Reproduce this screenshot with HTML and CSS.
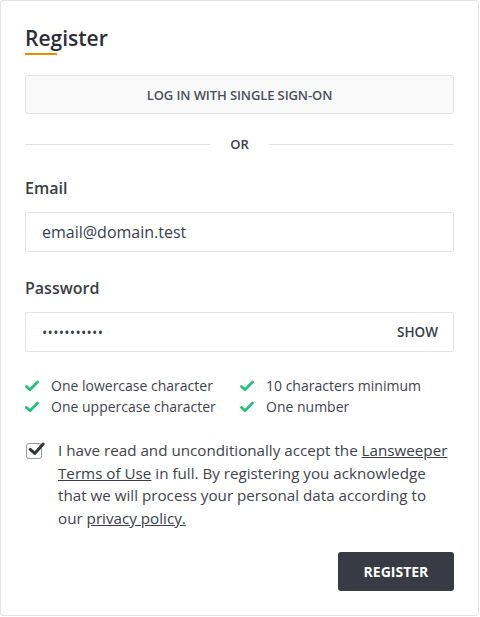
FILE: index.html
```html
<!DOCTYPE html>
<html>
<head>
<meta charset="utf-8">
<link rel="stylesheet" href="styles.css">
</head>
<body>
<div class="card">
  <h1 class="title">Register</h1>
  <button class="sso">LOG IN WITH SINGLE SIGN-ON</button>
  <div class="divider"><span class="line"></span><span class="or">OR</span><span class="line"></span></div>
  <div class="field">
    <label class="label">Email</label>
    <div class="input"><span class="value">email@domain.test</span></div>
  </div>
  <div class="field">
    <label class="label">Password</label>
    <div class="input"><span class="value dots">•••••••••••</span><span class="show">SHOW</span></div>
  </div>
  <ul class="rules">
    <li><svg class="tick" viewBox="0 0 14 12"><path d="M1.5 6.5 L5 9.8 L12.5 2" fill="none" stroke="#27c07d" stroke-width="2.8" stroke-linecap="round" stroke-linejoin="round"/></svg>One lowercase character</li>
    <li><svg class="tick" viewBox="0 0 14 12"><path d="M1.5 6.5 L5 9.8 L12.5 2" fill="none" stroke="#27c07d" stroke-width="2.8" stroke-linecap="round" stroke-linejoin="round"/></svg>10 characters minimum</li>
    <li><svg class="tick" viewBox="0 0 14 12"><path d="M1.5 6.5 L5 9.8 L12.5 2" fill="none" stroke="#27c07d" stroke-width="2.8" stroke-linecap="round" stroke-linejoin="round"/></svg>One uppercase character</li>
    <li><svg class="tick" viewBox="0 0 14 12"><path d="M1.5 6.5 L5 9.8 L12.5 2" fill="none" stroke="#27c07d" stroke-width="2.8" stroke-linecap="round" stroke-linejoin="round"/></svg>One number</li>
  </ul>
  <div class="accept">
    <span class="checkbox"><svg class="cbmark" viewBox="0 0 20 18"><path d="M3 9.5 L8 14 L17.5 3.5" fill="none" stroke="#33363d" stroke-width="3.4" stroke-linecap="round" stroke-linejoin="round"/></svg></span>
    <p class="accept-text">I have read and unconditionally accept the <a>Lansweeper Terms of Use</a> in full. By registering you acknowledge that we will process your personal data according to our <a>privacy policy.</a></p>
  </div>
  <div class="actions"><button class="register">REGISTER</button></div>
</div>
</body>
</html>
```
FILE: styles.css
```css
* { box-sizing: border-box; }
html, body { margin: 0; padding: 0; background: #fff; }
body { font-family: "Open Sans", "Noto Sans", sans-serif; color: #3a3d45; }
.card {
  width: 479px; height: 616px;
  border: 1px solid #e3e3e3; border-radius: 3px;
  padding: 23px 24px 0 24px;
}
.title {
  margin: 0; font-size: 21px; font-weight: 600; color: #2b2f38;
  line-height: 28px; display: inline-block; position: relative;
}
.title::after {
  content: ""; position: absolute; left: 0; bottom: -3px;
  width: 32px; height: 2px; background: #f08a00;
}
.sso {
  display: block; width: 100%; height: 39px; margin-top: 23px;
  background: #f9f9f9; border: 1px solid #e3e3e3; border-radius: 3px;
  font-family: inherit; font-size: 13px; font-weight: 600; color: #4b505a;
  letter-spacing: -0.1px;
}
.divider { display: flex; align-items: center; gap: 20px; margin-top: 21px; height: 18px; }
.line { flex: 1; height: 1px; background: #e3e3e3; }
.or { font-size: 13px; font-weight: 600; color: #3a3d45; }
.field { margin-top: 25px; }
.field + .field { margin-top: 26px; }
.label { display: block; font-size: 16px; font-weight: 600; color: #3a3d45; line-height: 20px; }
.input {
  margin-top: 14px; height: 40px; border: 1px solid #e3e3e3; border-radius: 2px;
  display: flex; align-items: center; justify-content: space-between; padding: 0 15px 0 16px;
}
.value { font-size: 16px; color: #3a3f4a; }
.dots { font-size: 14px; letter-spacing: 0.3px; }
.show { font-size: 13.5px; font-weight: 600; color: #3a3d45; }
.rules {
  list-style: none; margin: 23px 0 0 0; padding: 0;
  display: grid; grid-template-columns: 215px 1fr; row-gap: 0;
}
.rules li { display: flex; align-items: center; font-size: 14px; line-height: 21px; color: #3f434c; }
.tick { width: 14px; height: 12px; margin-right: 12px; }
.accept { display: flex; margin-top: 22px; }
.checkbox {
  flex: none; width: 16px; height: 16px; margin-top: 4px; margin-right: 16px; margin-left: 1px;
  border: 1px solid #9a9a9a; border-radius: 3px; position: relative; background: #fff;
}
.cbmark { position: absolute; left: 0; top: -3px; width: 19px; height: 16px; }
.accept-text { margin: 0; font-size: 15.2px; line-height: 22.5px; color: #3f434c; }
.accept-text a { color: #3a3d45; text-decoration: underline; }
.actions { display: flex; justify-content: flex-end; margin-top: 23px; }
.register {
  width: 116px; height: 39px; background: #383b43; color: #fff; border: none; border-radius: 3px;
  font-family: inherit; font-size: 14px; font-weight: 700;
}
```
